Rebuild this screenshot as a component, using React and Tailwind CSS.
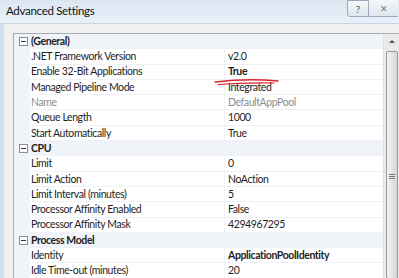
import React from "react";

const rows = [
  { cat: "(General)" },
  { name: ".NET Framework Version", value: "v2.0" },
  { name: "Enable 32-Bit Applications", value: "True", bold: true },
  { name: "Managed Pipeline Mode", value: "Integrated" },
  { name: "Name", value: "DefaultAppPool", dim: true },
  { name: "Queue Length", value: "1000" },
  { name: "Start Automatically", value: "True" },
  { cat: "CPU" },
  { name: "Limit", value: "0" },
  { name: "Limit Action", value: "NoAction" },
  { name: "Limit Interval (minutes)", value: "5" },
  { name: "Processor Affinity Enabled", value: "False" },
  { name: "Processor Affinity Mask", value: "4294967295" },
  { cat: "Process Model" },
  { name: "Identity", value: "ApplicationPoolIdentity", bold: true },
  { name: "Idle Time-out (minutes)", value: "20" },
];

function Minus() {
  return (
    <div className="w-[9px] h-[9px] border border-[#8a8f96] bg-white flex items-center justify-center shrink-0">
      <div className="w-[5px] h-px bg-[#333]" />
    </div>
  );
}

export default function App() {
  return (
    <div
      className="w-[399px] h-[278px] overflow-hidden relative flex flex-col bg-[#f0f0f0] text-[#1e1e1e]"
      style={{ fontFamily: 'Lato, "Open Sans", sans-serif' }}
    >
      {/* title bar */}
      <div className="h-[24px] shrink-0 flex items-start justify-between bg-gradient-to-b from-[#dbe6f2] to-[#e9f1f9] border-b border-[#c6d3e0]">
        <div className="pl-[6px] pt-[4px] text-[11.5px] tracking-[-0.3px] leading-[14px] text-[#111]">Advanced Settings</div>
        <div className="flex h-[17px] pr-[1px]">
          <div className="w-[22px] h-[17px] border border-[#9aa8b8] rounded-bl-[3px] bg-gradient-to-b from-[#f4f7fa] to-[#dfe6ee] flex items-center justify-center text-[10px] leading-none text-[#555]">
            ?
          </div>
          <div className="w-[29px] h-[17px] border-b border-[#9aa8b8] bg-gradient-to-b from-[#f4f7fa] to-[#dfe6ee] flex items-center justify-center text-[9px] leading-none text-[#777]">
            ✕
          </div>
        </div>
      </div>
      {/* body */}
      <div className="flex-1 flex border-l-[4px] border-[#d3e1ef] pl-[9px] pt-[9px]">
        <div className="flex-1 flex border-t border-l border-[#a5acb5] bg-white">
          <div className="flex-1 flex flex-col text-[10.5px] tracking-[-0.4px]">
            {rows.map((r, i) =>
              r.cat ? (
                <div
                  key={i}
                  className="h-[15.3px] shrink-0 flex items-center bg-[#f0f3f8] border-b border-[#eef1f5]"
                >
                  <div className="w-[16px] flex justify-center pl-[2px]">
                    <Minus />
                  </div>
                  <span className="pl-[1px] font-bold leading-none">{r.cat}</span>
                </div>
              ) : (
                <div key={i} className="h-[15.3px] shrink-0 flex items-stretch">
                  <div className="w-[16px] shrink-0 bg-[#f0f3f8]" />
                  <div
                    className={
                      "w-[195px] shrink-0 flex items-center pl-[1px] border-b border-r border-[#eef1f5] leading-none " +
                      (r.dim ? "text-[#8d8d8d]" : "")
                    }
                  >
                    {r.name}
                  </div>
                  <div
                    className={
                      "flex-1 flex items-center pl-[3px] border-b border-[#eef1f5] leading-none " +
                      (r.dim ? "text-[#8d8d8d] " : "") +
                      (r.bold ? "font-bold" : "")
                    }
                  >
                    {r.value}
                  </div>
                </div>
              )
            )}
          </div>
          {/* scrollbar */}
          <div className="w-[16px] shrink-0 bg-[#eaeaea] border-l border-[#e0e0e0] flex flex-col items-center">
            <div className="h-[15px] flex items-center justify-center">
              <div className="w-0 h-0 border-l-[3px] border-r-[3px] border-b-[3px] border-l-transparent border-r-transparent border-b-[#555]" />
            </div>
            <div className="w-[12px] flex-1 mt-[2px] border border-[#9a9a9a] rounded-[2px] bg-gradient-to-r from-[#f2f2f2] via-[#e6e6e6] to-[#d6d6d6] flex flex-col items-center pt-[122px] gap-[1px]">
              <div className="w-[6px] h-px bg-[#777]" />
              <div className="w-[6px] h-px bg-[#777]" />
              <div className="w-[6px] h-px bg-[#777]" />
            </div>
          </div>
        </div>
      </div>
      {/* red scribble */}
      <svg className="absolute left-[212px] top-[77px]" width="70" height="10" viewBox="0 0 70 10">
        <path d="M3 5 C 20 3, 45 2, 66 4" stroke="#d9252b" strokeWidth="1.4" fill="none" strokeLinecap="round" />
        <path d="M6 7.5 C 25 6, 45 5.5, 62 6" stroke="#d9252b" strokeWidth="1.2" fill="none" strokeLinecap="round" />
      </svg>
    </div>
  );
}
